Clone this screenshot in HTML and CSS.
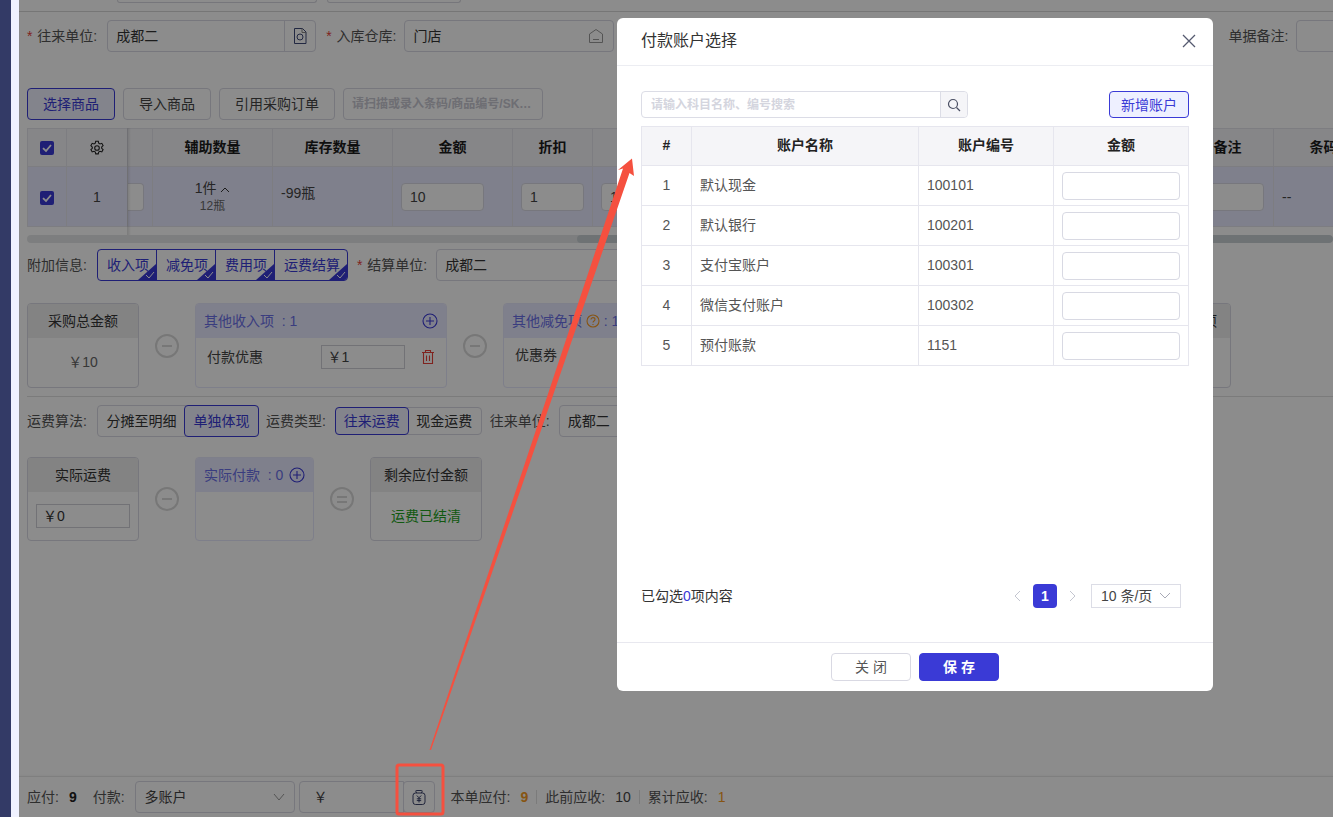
FILE: index.html
```html
<!DOCTYPE html>
<html lang="zh-CN">
<head>
    <meta charset="UTF-8">
    <meta name="viewport" content="width=device-width, initial-scale=1.0">
    <title>付款账户选择</title>
    <link rel="stylesheet" href="styles.css">
</head>
<body>
    <div class="rail"></div>
    <div class="strip"></div>
    <div class="main">
        <div class="top-strip">
            <div class="top-stub stub-a"></div>
            <div class="top-stub stub-b"></div>
        </div>

        <div class="form-row">
            <span class="label"><i class="req">*</i> 往来单位:</span>
            <div class="input-group w-209 ml-5">
                <input class="text-input" value="成都二">
                <span class="addon">
                    <svg width="14" height="16" viewBox="0 0 14 16" fill="none" stroke="#3f4a78" stroke-width="1"><path d="M1.500.5h8l3.500 3.500v11.500h-11.500z"/><path d="M9 .5v4h4" stroke="#888"/><circle cx="7" cy="9" r="3"/></svg>
                </span>
            </div>
            <span class="label gap-5"><i class="req">*</i> 入库仓库:</span>
            <div class="input-group w-210 ml-3">
                <input class="text-input" value="门店">
                <svg class="inner-icon" width="16" height="16" viewBox="0 0 16 16" fill="none" stroke="#999" stroke-width="1"><path d="M1.500 6 8 1.500 14.500 6v8.500h-13z"/><path d="M5 11.500h6"/></svg>
            </div>
            <span class="label note-label">单据备注:</span>
            <div class="input-group w-120 ml-3"><input class="text-input"></div>
        </div>

        <div class="toolbar">
            <button class="btn btn-primary w-88">选择商品</button>
            <button class="btn w-88">导入商品</button>
            <button class="btn w-116">引用采购订单</button>
            <input class="scan-input" placeholder="请扫描或录入条码/商品编号/SKU等">
        </div>

        <div class="grid-wrap">
            <table class="grid">
                <colgroup>
                    <col class="c39"><col class="c61"><col class="c25"><col class="c120"><col class="c120"><col class="c120">
                    <col class="c80"><col class="c589"><col class="c92"><col class="c100">
                </colgroup>
                <thead>
                    <tr>
                        <th><span class="check"><svg width="12" height="12" viewBox="0 0 12 12"><path d="M2 6.200 5 9l5-6" fill="none" stroke="#fff" stroke-width="1.800"/></svg></span></th>
                        <th>
                            <svg class="gear" width="16" height="16" viewBox="0 0 16 16" fill="none" stroke="#222" stroke-width="1.100"><path d="M6.700 1.300h2.600l.4 1.900 1.300.7 1.800-.6 1.300 2.300-1.400 1.300v1.400l1.400 1.300-1.300 2.300-1.800-.6-1.300.7-.4 1.900H6.700l-.4-1.900-1.300-.7-1.800.6-1.300-2.300 1.400-1.300V7.100L1.900 5.600l1.300-2.300 1.800.6 1.300-.7z"/><circle cx="8" cy="8" r="2.300"/></svg>
                        </th>
                        <th></th>
                        <th>辅助数量</th>
                        <th>库存数量</th>
                        <th>金额</th>
                        <th>折扣</th>
                        <th></th>
                        <th>备注</th>
                        <th>条码</th>
                    </tr>
                </thead>
                <tbody>
                    <tr>
                        <td class="center"><span class="check"><svg width="12" height="12" viewBox="0 0 12 12"><path d="M2 6.200 5 9l5-6" fill="none" stroke="#fff" stroke-width="1.800"/></svg></span></td>
                        <td class="center">1</td>
                        <td class="stub-cell"><span class="cell-stub"></span></td>
                        <td class="center qty">
                            <div class="qty-main">1件 <svg width="10" height="7" viewBox="0 0 10 7" fill="none" stroke="#333"><path d="M1 6l4-4 4 4"/></svg></div>
                            <div class="qty-sub">12瓶</div>
                        </td>
                        <td class="stock">-99瓶</td>
                        <td><input class="cell-input w-83" value="10"></td>
                        <td><input class="cell-input w-63" value="1"></td>
                        <td><input class="cell-input w-63" value="1"></td>
                        <td class="right"><input class="cell-input w-63"></td>
                        <td>--</td>
                    </tr>
                </tbody>
            </table>
            <div class="freeze-shadow"></div>
            <div class="scrollbar"><div class="scroll-thumb"></div></div>
        </div>

        <div class="attach-row">
            <span class="label">附加信息:</span>
            <div class="seg-checks">
                <span class="seg-check w-59">收入项<svg class="corner" width="18" height="16" viewBox="0 0 18 16"><path d="M18 0v16H0z" fill="#3a3ad6"/><path d="M8 11l3 3 5-6" fill="none" stroke="#fff"/></svg></span>
                <span class="seg-check w-59">减免项<svg class="corner" width="18" height="16" viewBox="0 0 18 16"><path d="M18 0v16H0z" fill="#3a3ad6"/><path d="M8 11l3 3 5-6" fill="none" stroke="#fff"/></svg></span>
                <span class="seg-check w-59">费用项<svg class="corner" width="18" height="16" viewBox="0 0 18 16"><path d="M18 0v16H0z" fill="#3a3ad6"/><path d="M8 11l3 3 5-6" fill="none" stroke="#fff"/></svg></span>
                <span class="seg-check w-72">运费结算<svg class="corner" width="18" height="16" viewBox="0 0 18 16"><path d="M18 0v16H0z" fill="#3a3ad6"/><path d="M8 11l3 3 5-6" fill="none" stroke="#fff"/></svg></span>
            </div>
            <span class="label gap-4"><i class="req">*</i> 结算单位:</span>
            <div class="input-group w-210 ml-4"><input class="text-input" value="成都二"></div>
        </div>

        <div class="cards cards-top">
            <div class="card w-112">
                <div class="card-head">采购总金额</div>
                <div class="card-value">￥10</div>
            </div>
            <span class="op"><span class="op-bar"></span></span>
            <div class="card card-blue w-252">
                <div class="card-head">
                    <span>其他收入项 &nbsp;: 1</span>
                    <svg class="plus" width="16" height="16" viewBox="0 0 16 16" fill="none" stroke="#3a3ad6" stroke-width="1.100"><circle cx="8" cy="8" r="7"/><path d="M8 4v8M4 8h8"/></svg>
                </div>
                <div class="card-line">
                    <span>付款优惠</span>
                    <span class="money-box w-84">￥1</span>
                    <svg width="14" height="16" viewBox="0 0 14 16" fill="none" stroke="#e8413a" stroke-width="1.100"><path d="M1 3.500h12M4.500 3.500V1.500h5v2M2.500 3.500v11h9v-11M5.500 6.500v5.500M8.500 6.500v5.500"/></svg>
                </div>
            </div>
            <span class="op"><span class="op-bar"></span></span>
            <div class="card card-blue w-252">
                <div class="card-head">
                    <span>其他减免项 <svg class="help" width="14" height="14" viewBox="0 0 14 14" fill="none" stroke="#f59a23" stroke-width="1.100"><circle cx="7" cy="7" r="6"/><path d="M5 5.500c0-2.500 4-2.500 4 0C9 7 7 7 7 8.500M7 10v1"/></svg> : 1</span>
                </div>
                <div class="card-line"><span>优惠券</span></div>
            </div>
            <div class="card w-112 far-card">
                <div class="card-head head-right">其他费用项</div>
                <div class="card-value"></div>
            </div>
        </div>

        <div class="divider"></div>

        <div class="freight-row">
            <span class="label">运费算法:</span>
            <div class="seg tall ml-5">
                <span class="seg-item w-87">分摊至明细</span>
                <span class="seg-item seg-on w-75">单独体现</span>
            </div>
            <span class="label gap-2">运费类型:</span>
            <div class="seg ml-4">
                <span class="seg-item seg-on w-74">往来运费</span>
                <span class="seg-item w-73">现金运费</span>
            </div>
            <span class="label gap-3">往来单位:</span>
            <div class="input-group w-210 ml-4"><input class="text-input" value="成都二"></div>
        </div>

        <div class="cards cards-bottom">
            <div class="card w-112">
                <div class="card-head">实际运费</div>
                <div class="card-box"><span class="money-box grow">￥0</span></div>
            </div>
            <span class="op"><span class="op-bar"></span></span>
            <div class="card card-blue w-119">
                <div class="card-head head-tight">
                    <span class="nowrap">实际付款 &nbsp;: 0</span>
                    <svg class="plus" width="16" height="16" viewBox="0 0 16 16" fill="none" stroke="#3a3ad6" stroke-width="1.100"><circle cx="8" cy="8" r="7"/><path d="M8 4v8M4 8h8"/></svg>
                </div>
            </div>
            <span class="op"><span class="op-bar"></span><span class="op-bar"></span></span>
            <div class="card w-112">
                <div class="card-head">剩余应付金额</div>
                <div class="card-value green">运费已结清</div>
            </div>
        </div>

        <div class="footer">
            <span class="label">应付:</span>
            <b class="foot-num">9</b>
            <span class="label pay-label">付款:</span>
            <div class="input-group w-160 select-box">
                <span class="select-text">多账户</span>
                <svg width="12" height="8" viewBox="0 0 12 8" fill="none" stroke="#999"><path d="M1 1l5 6 5-6"/></svg>
            </div>
            <div class="money-input">￥</div>
            <span class="money-addon">
                <svg width="14" height="15" viewBox="0 0 14 15" fill="none" stroke="#27305c" stroke-width=".9"><path d="M4.500 3 3.800 1.200c-.1-.4.100-.7.500-.7h5.400c.4 0 .6.300.5.700L9.500 3"/><rect x="1" y="3" width="12" height="11.500" rx="2.500"/><path d="M4.800 5.500 7 7.800l2.200-2.300M7 7.800v4.700M4.800 8.800h4.400M4.800 10.600h4.400"/></svg>
            </span>
            <span class="label sum-first">本单应付:</span>
            <b class="orange">9</b>
            <span class="sep"></span>
            <span class="label">此前应收:</span>
            <span class="foot-val">10</span>
            <span class="sep"></span>
            <span class="label">累计应收:</span>
            <span class="orange">1</span>
        </div>

        <div class="mask"></div>
    </div>

    <div class="modal">
        <div class="modal-head">
            <span class="modal-title">付款账户选择</span>
            <svg width="14" height="14" viewBox="0 0 14 14" fill="none" stroke="#555a70" stroke-width="1.300"><path d="M1 1l12 12M13 1 1 13"/></svg>
        </div>
        <div class="modal-body">
            <div class="search-row">
                <div class="search-box">
                    <input class="search-input" placeholder="请输入科目名称、编号搜索">
                    <span class="search-btn">
                        <svg width="14" height="14" viewBox="0 0 14 14" fill="none" stroke="#4a4f63" stroke-width="1.200"><circle cx="6" cy="6" r="4.500"/><path d="M9.500 9.500 13 13"/></svg>
                    </span>
                </div>
                <button class="btn btn-primary add-btn">新增账户</button>
            </div>
            <table class="acct-table">
                <colgroup><col class="a50"><col class="a227"><col class="a135"><col class="a135"></colgroup>
                <thead>
                    <tr><th>#</th><th>账户名称</th><th>账户编号</th><th>金额</th></tr>
                </thead>
                <tbody>
                    <tr><td class="center">1</td><td>默认现金</td><td>100101</td><td class="center"><input class="amt-input"></td></tr>
                    <tr><td class="center">2</td><td>默认银行</td><td>100201</td><td class="center"><input class="amt-input"></td></tr>
                    <tr><td class="center">3</td><td>支付宝账户</td><td>100301</td><td class="center"><input class="amt-input"></td></tr>
                    <tr><td class="center">4</td><td>微信支付账户</td><td>100302</td><td class="center"><input class="amt-input"></td></tr>
                    <tr><td class="center">5</td><td>预付账款</td><td>1151</td><td class="center"><input class="amt-input"></td></tr>
                </tbody>
            </table>
            <div class="pager-row">
                <span>已勾选<em class="count">0</em>项内容</span>
                <div class="pager">
                    <svg width="8" height="12" viewBox="0 0 8 12" fill="none" stroke="#c4c6d0"><path d="M7 1 2 6l5 5"/></svg>
                    <span class="page-on">1</span>
                    <svg width="8" height="12" viewBox="0 0 8 12" fill="none" stroke="#c4c6d0"><path d="m1 1 5 5-5 5"/></svg>
                    <span class="page-size">10 条/页
                        <svg width="12" height="8" viewBox="0 0 12 8" fill="none" stroke="#a8aab6"><path d="M1 1l5 5 5-5"/></svg>
                    </span>
                </div>
            </div>
        </div>
        <div class="modal-foot">
            <button class="btn foot-btn">关 闭</button>
            <button class="btn foot-btn btn-solid">保 存</button>
        </div>
    </div>

    <svg class="callout" width="1333" height="817" viewBox="0 0 1333 817">
        <polygon points="429.500,750 431,750 629.500,173 634,176 632,158.500 618,170 623,168.500" fill="#f5503f"/>
        <rect x="397" y="765" width="46" height="49" rx="2" fill="none" stroke="#f5503f" stroke-width="3"/>
    </svg>
</body>
</html>
```

FILE: styles.css
```css
* { margin: 0; padding: 0; box-sizing: border-box; }
html, body { height: 100%; }
body {
    display: flex;
    overflow: hidden;
    position: relative;
    font-family: "Liberation Sans", "Noto Sans CJK SC", sans-serif;
    font-size: 14px;
    line-height: 20px;
    color: #333;
    background: #fff;
}
input, button { font: inherit; color: inherit; }
em, i { font-style: normal; }
.nowrap { white-space: nowrap; }

.rail { width: 11px; background: #333a66; flex-shrink: 0; }
.strip { width: 8px; background: #f0f2ff; flex-shrink: 0; }
.main {
    flex: 1;
    min-width: 0;
    position: relative;
    overflow: hidden;
    display: flex;
    flex-direction: column;
    padding-left: 8px;
}
.mask { position: absolute; inset: 0; background: rgba(0,0,0,.45); }

.top-strip {
    height: 12px;
    margin-left: -8px;
    border-bottom: 1px solid #d8d8d8;
    position: relative;
    display: flex;
    flex-shrink: 0;
    padding-left: 98px;
    gap: 10px;
}
.top-stub { height: 3px; border: 1px solid #d8d8e0; border-top: 0; border-radius: 0 0 3px 3px; }
.stub-a { width: 200px; }
.stub-b { width: 134px; }

.label { color: #555; white-space: nowrap; flex-shrink: 0; }
.req { color: #e8413a; margin-right: 1px; }
.gap-5 { margin-left: 5px; }
.gap-4 { margin-left: 4px; }
.gap-3 { margin-left: 3px; }
.gap-2 { margin-left: 2px; }
.ml-5 { margin-left: 5px; }
.ml-4 { margin-left: 4px; }
.ml-3 { margin-left: 3px; }

.form-row, .attach-row, .freight-row, .toolbar, .cards, .footer { display: flex; flex-shrink: 0; }
.form-row, .attach-row, .freight-row, .footer { align-items: center; }
.form-row { height: 32px; margin-top: 8px; gap: 5px; }
.attach-row { height: 32px; margin-top: 6px; gap: 5px; }
.note-label { margin-left: 609px; }

.input-group {
    height: 32px;
    border: 1px solid #d9d9e3;
    border-radius: 4px;
    display: flex;
    align-items: center;
    position: relative;
    flex-shrink: 0;
    background: #fff;
}
.w-209 { width: 209px; }
.w-210 { width: 210px; }
.w-120 { width: 120px; }
.w-160 { width: 160px; }
.text-input { flex: 1; min-width: 0; height: 100%; border: 0; outline: 0; background: none; padding: 0 8px 2px; }
.addon {
    width: 31px;
    height: 100%;
    border-left: 1px solid #d9d9e3;
    display: flex;
    align-items: center;
    justify-content: center;
}
.inner-icon { margin-right: 9px; }

.toolbar { margin-top: 36px; gap: 8px; height: 32px; }
.btn {
    height: 32px;
    border: 1px solid #d9d9e3;
    border-radius: 4px;
    background: #fff;
    color: #444;
    flex-shrink: 0;
}
.btn-primary { border-color: #3a3ad6; background: #eef0ff; color: #3a3ad6; }
.w-88 { width: 88px; }
.w-116 { width: 116px; }
.scan-input {
    width: 200px;
    height: 32px;
    border: 1px solid #d9d9e3;
    border-radius: 4px;
    padding: 0 8px;
    font-size: 12px;
    font-weight: 700;
    outline: 0;
    text-overflow: ellipsis;
}
.scan-input::placeholder { color: #c8c8d2; }

.grid-wrap { margin-top: 8px; position: relative; flex-shrink: 0; height: 115px; }
.grid { table-layout: fixed; border-collapse: collapse; width: 1346px; }
.c39 { width: 39px; }
.c61 { width: 61px; }
.c25 { width: 25px; }
.c120 { width: 120px; }
.c80 { width: 80px; }
.c589 { width: 589px; }
.c92 { width: 92px; }
.c100 { width: 100px; }
.grid th, .grid td { border: 1px solid #e4e4ec; }
.grid th { height: 38px; padding-bottom: 2px; background: #f5f5f8; color: #1c1c1c; font-weight: 700; text-align: center; }
.grid td { height: 60px; background: #e8e9ff; padding: 0 8px; color: #444; overflow: hidden; }
.grid td.stub-cell { padding: 0; }
.center { text-align: center; }
.right { text-align: right; }
.grid td.center { padding: 0; }
.grid td.right { padding-right: 9px; }
.grid td.stock { padding-bottom: 7px; }
.check {
    display: inline-flex;
    width: 14px;
    height: 14px;
    background: #3a3ad6;
    border-radius: 2px;
    align-items: center;
    justify-content: center;
    vertical-align: middle;
}
.gear { vertical-align: middle; }
.cell-stub { display: block; width: 16px; height: 28px; border: 1px solid #d9d9e3; border-left: 0; border-radius: 0 4px 4px 0; background: #fff; }
.qty { line-height: 18px; }
.qty-sub { font-size: 12px; color: #666; }
.cell-input {
    height: 28px;
    border: 1px solid #d9d9e3;
    border-radius: 4px;
    padding: 0 8px;
    outline: 0;
    vertical-align: middle;
}
.w-83 { width: 83px; }
.w-63 { width: 63px; }
.freeze-shadow {
    position: absolute;
    left: 100px;
    top: 0;
    bottom: 0;
    width: 4px;
    background: linear-gradient(to right, rgba(0,0,0,.12), rgba(0,0,0,0));
}
.scrollbar { position: absolute; left: 0; right: 0; top: 107px; height: 8px; background: #e4e6e8; border-radius: 4px; overflow: hidden; }
.scroll-thumb { margin-left: 550px; height: 8px; background: #c8d0d4; border-radius: 4px; }

.seg-checks {
    display: flex;
    height: 32px;
    border: 1px solid #3a3ad6;
    border-radius: 4px;
    overflow: hidden;
    flex-shrink: 0;
    margin-left: 5px;
}
.seg-check {
    position: relative;
    color: #3a3ad6;
    line-height: 30px;
    padding-left: 9px;
    border-right: 1px solid #3a3ad6;
}
.seg-check:last-child { border-right: 0; }
.w-59 { width: 59px; }
.w-72 { width: 72px; }
.corner { position: absolute; right: 0; bottom: 0; }

.cards-top { margin-top: 22px; height: 85px; }
.cards-bottom { margin-top: 20px; height: 84px; }
.cards { align-items: stretch; }
.card { border: 1px solid #d9d9e3; border-radius: 4px; overflow: hidden; background: #fff; flex-shrink: 0; }
.w-112 { width: 112px; }
.w-252 { width: 252px; }
.w-119 { width: 119px; }
.card-head {
    height: 34px;
    background: #eeeeee;
    display: flex;
    align-items: center;
    justify-content: center;
    color: #333;
}
.head-right { justify-content: flex-end; padding-right: 13px; }
.card-value { height: 48px; display: flex; align-items: center; justify-content: center; color: #666; }
.green { color: #1fa31f; }
.card-blue { border-color: #e6e7fb; }
.card-blue .card-head { background: #e8e9ff; color: #6a6fe8; justify-content: space-between; padding: 0 8px; }
.card-blue .head-tight { justify-content: flex-start; gap: 6px; }
.plus { flex-shrink: 0; }
.help { vertical-align: -2px; }
.card-line { display: flex; align-items: center; justify-content: space-between; padding: 7px 11px 0; color: #444; }
.card-line span:first-child { width: 112px; }
.money-box {
    height: 24px;
    border: 1px solid #d0d0d8;
    line-height: 22px;
    padding-left: 6px;
    display: block;
    flex-shrink: 0;
}
.w-84 { width: 84px; }
.card-line .money-box { margin-right: 15px; }
.card-box { padding: 12px 8px 0; }
.grow { width: 100%; }
.op {
    width: 24px;
    height: 24px;
    margin: auto 16px;
    border: 2px solid #d9d9d9;
    border-radius: 50%;
    flex-shrink: 0;
    display: flex;
    flex-direction: column;
    gap: 3px;
    align-items: center;
    justify-content: center;
}
.op-bar { width: 10px; height: 2px; background: #d9d9d9; }
.far-card { margin-left: 364px; }

.divider { height: 1px; background: #e0e0e0; margin-top: 8px; flex-shrink: 0; }
.freight-row { height: 32px; margin-top: 8px; gap: 5px; }
.seg { display: flex; height: 28px; border: 1px solid #d9d9e3; border-radius: 4px; flex-shrink: 0; }
.seg.tall { height: 32px; }
.seg-item { text-align: center; line-height: 26px; color: #333; }
.tall .seg-item { line-height: 30px; }
.seg-on { border: 1px solid #3a3ad6; background: #eef0ff; color: #3a3ad6; margin: -1px; border-radius: 4px; }
.w-87 { width: 87px; }
.w-75 { width: 75px; }
.w-74 { width: 74px; }
.w-73 { width: 73px; }

.footer {
    margin: auto 0 0 -8px;
    padding-left: 8px;
    height: 41px;
    border-top: 1px solid #e8e8e8;
    background: #fff;
    box-shadow: 0 -1px 2px rgba(0,0,0,.03);
}
.foot-num { margin-left: 10px; color: #222; }
.pay-label { margin-left: 16px; margin-right: 10px; }
.select-box { justify-content: space-between; padding: 0 9px; width: 160px; }
.select-text { color: #444; }
.money-input {
    width: 105px;
    height: 32px;
    border: 1px solid #d9d9e3;
    border-radius: 4px 0 0 4px;
    margin-left: 4px;
    padding: 5px 14px;
    color: #444;
    flex-shrink: 0;
}
.money-addon {
    width: 32px;
    height: 32px;
    border: 1px solid #d9d9e3;
    border-radius: 4px;
    margin-left: -1px;
    display: flex;
    align-items: center;
    justify-content: center;
    flex-shrink: 0;
}
.sum-first { margin-left: 16px; }
.orange { color: #f59a23; margin-left: 10px; }
.foot-val { margin-left: 10px; color: #444; }
.sep { width: 1px; height: 14px; background: #e0e0e0; margin: 0 8px; }

.modal {
    position: absolute;
    left: 617px;
    top: 18px;
    width: 596px;
    height: 673px;
    background: #fff;
    border-radius: 6px;
    display: flex;
    flex-direction: column;
    color: #333;
}
.modal-head {
    height: 48px;
    border-bottom: 1px solid #ecedf2;
    display: flex;
    align-items: center;
    justify-content: space-between;
    padding: 0 17px 2px 24px;
    flex-shrink: 0;
}
.modal-title { font-size: 16px; color: #333; }
.modal-body {
    flex: 1;
    display: flex;
    flex-direction: column;
    padding: 25px 24px 34px;
    min-height: 0;
}
.search-row { display: flex; justify-content: space-between; height: 27px; }
.search-box { display: flex; width: 327px; height: 27px; border: 1px solid #dcdde6; border-radius: 4px; }
.search-input { flex: 1; min-width: 0; border: 0; outline: 0; background: none; padding: 0 9px; font-size: 12px; font-weight: 700; }
.search-input::placeholder { color: #d4d5de; }
.search-btn {
    width: 27px;
    background: #f5f5f8;
    border-left: 1px solid #dcdde6;
    border-radius: 0 4px 4px 0;
    display: flex;
    align-items: center;
    justify-content: center;
}
.add-btn { width: 80px; height: 27px; }

.acct-table { margin-top: 8px; table-layout: fixed; border-collapse: collapse; width: 547px; }
.a50 { width: 50px; }
.a227 { width: 227px; }
.a135 { width: 135px; }
.acct-table th, .acct-table td { border: 1px solid #e6e6ee; }
.acct-table th { height: 39px; padding-bottom: 2px; background: #f5f5f8; font-weight: 700; color: #222; text-align: center; }
.acct-table td { height: 40px; padding: 0 8px 2px; color: #555; }
.acct-table td.center { padding: 0 0 2px; }
.amt-input { width: 118px; height: 28px; margin-top: 2px; border: 1px solid #d8d9e3; border-radius: 4px; outline: 0; vertical-align: middle; }

.pager-row {
    margin-top: auto;
    display: flex;
    align-items: center;
    justify-content: space-between;
    height: 24px;
    padding-right: 8px;
}
.count { color: #3a3ad6; }
.pager { display: flex; align-items: center; gap: 12px; }
.page-on {
    width: 24px;
    height: 24px;
    background: #3a3ad6;
    border-radius: 4px;
    color: #fff;
    font-weight: 700;
    text-align: center;
    line-height: 24px;
}
.page-size {
    width: 90px;
    height: 24px;
    border: 1px solid #dcdde6;
    margin-left: 2px;
    padding: 0 9px;
    display: flex;
    align-items: center;
    justify-content: space-between;
    color: #444;
}

.modal-foot {
    height: 49px;
    border-top: 1px solid #e8e8ef;
    display: flex;
    justify-content: center;
    align-items: flex-start;
    gap: 8px;
    padding-top: 10px;
    flex-shrink: 0;
}
.foot-btn { width: 80px; height: 28px; color: #555; }
.btn-solid { background: #3a3ad6; border-color: #3a3ad6; color: #fff; font-weight: 700; }

.callout { position: absolute; left: 0; top: 0; pointer-events: none; }
```
